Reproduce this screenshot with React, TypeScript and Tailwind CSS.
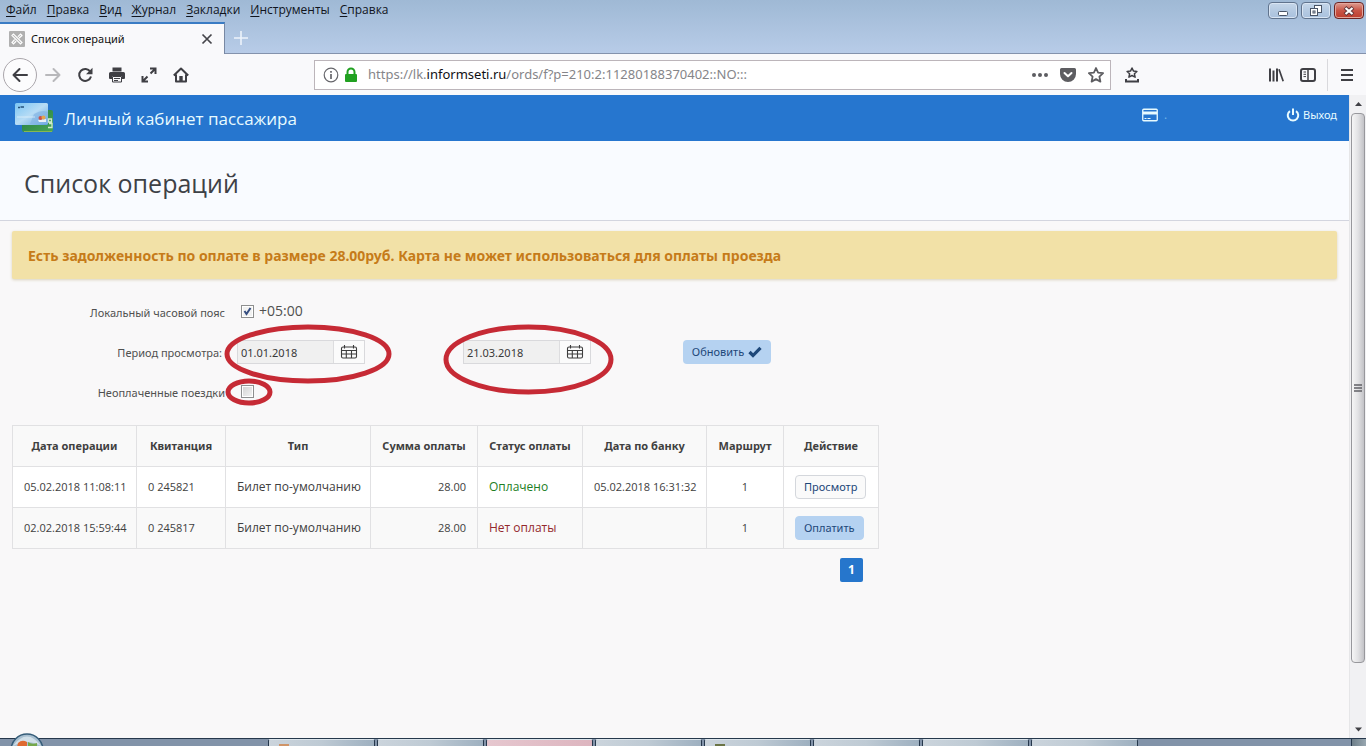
import React from "react";

const menus = ["Файл", "Правка", "Вид", "Журнал", "Закладки", "Инструменты", "Справка"];

const operations = [
  { date: "05.02.2018 11:08:11", receipt: "0 245821", type: "Билет по-умолчанию", sum: "28.00", paid: true, bank: "05.02.2018 16:31:32", route: "1" },
  { date: "02.02.2018 15:59:44", receipt: "0 245817", type: "Билет по-умолчанию", sum: "28.00", paid: false, bank: "", route: "1" },
];

const columns = [
  { title: "Дата операции", width: "w-[124px]" },
  { title: "Квитанция", width: "w-[89px]" },
  { title: "Тип", width: "w-[145px]" },
  { title: "Сумма оплаты", width: "w-[107px]" },
  { title: "Статус оплаты", width: "w-[105px]" },
  { title: "Дата по банку", width: "w-[124px]" },
  { title: "Маршрут", width: "w-[77px]" },
  { title: "Действие", width: "w-[95px]" },
];

function Icon({ children, label, className = "h-4 w-4" }: { children: React.ReactNode; label?: string; className?: string }) {
  return (
    <svg viewBox="0 0 16 16" className={className} fill="none" stroke="currentColor" strokeWidth="2" aria-label={label} aria-hidden={label ? undefined : true}>
      {children}
    </svg>
  );
}

function ToolButton({ label, children, className = "" }: { label: string; children: React.ReactNode; className?: string }) {
  return (
    <button type="button" aria-label={label} className={`flex h-8 w-8 shrink-0 items-center justify-center ${className}`}>
      <Icon>{children}</Icon>
    </button>
  );
}

function Ellipse({ className, w, h }: { className: string; w: number; h: number }) {
  return (
    <svg viewBox={`0 0 ${w} ${h}`} className={`pointer-events-none absolute z-10 max-w-none ${className}`} aria-hidden="true">
      <ellipse cx={w / 2} cy={h / 2} rx={w / 2 - 3} ry={h / 2 - 3} fill="none" stroke="#c62a35" strokeWidth="5" />
    </svg>
  );
}

function TitleBar() {
  return (
    <div className="flex h-[22px] shrink-0 items-start justify-between">
      <nav className="flex h-5 items-center gap-2.5 pl-1.5 text-xs text-[#10141c]">
        {menus.map((m) => (
          <button type="button" key={m} className="leading-5">
            <u className="underline-offset-2">{m[0]}</u>
            {m.slice(1)}
          </button>
        ))}
      </nav>
      <div className="flex gap-[3px] pt-0.5 pr-0.5">
        <button type="button" aria-label="Свернуть" className="flex h-[17px] w-[30px] items-center justify-center rounded-sm border border-[#60738d] bg-linear-to-b from-[#c5d6e9] via-[#b5cae2] to-[#a9c1de] shadow-[inset_0_0_0_1px_#d9e5f3]">
          <svg viewBox="0 0 12 12" className="h-3 w-3"><rect x="1.5" y="6.5" width="9" height="4" rx="1" fill="#fff" stroke="#4a5567" /></svg>
        </button>
        <button type="button" aria-label="Восстановить" className="flex h-[17px] w-[30px] items-center justify-center rounded-sm border border-[#60738d] bg-linear-to-b from-[#c5d6e9] via-[#b5cae2] to-[#a9c1de] shadow-[inset_0_0_0_1px_#d9e5f3]">
          <svg viewBox="0 0 12 12" className="h-3 w-3" fill="#fff" stroke="#4a5567">
            <rect x="4.5" y="0.5" width="7" height="7" />
            <rect x="0.5" y="3.5" width="7" height="7" />
            <rect x="3" y="6" width="2" height="2" />
          </svg>
        </button>
        <button type="button" aria-label="Закрыть" className="flex h-[17px] w-[30px] items-center justify-center rounded-sm border border-[#6b2423] bg-linear-to-b from-[#dc9b91] via-[#c85547] to-[#bd3c2d] shadow-[inset_0_0_0_1px_#e2a79d]">
          <svg viewBox="0 0 12 12" className="h-3 w-3">
            <path d="M2 2.5 10 9.5M10 2.5 2 9.5" stroke="#5e3539" strokeWidth="4" />
            <path d="M2.5 3 9.5 9M9.5 3 2.5 9" stroke="#fff" strokeWidth="2.2" />
          </svg>
        </button>
      </div>
    </div>
  );
}

function TabStrip() {
  return (
    <div className="flex h-8 shrink-0 items-stretch">
      <div className="flex w-[225px] shrink-0 items-center border-t-2 border-r border-t-[#3a7cc4] border-r-[#7888a3] bg-[#f9f9fb] pr-[11px] pl-[9px]">
        <svg viewBox="0 0 16 16" className="h-4 w-4 shrink-0" aria-hidden="true">
          <rect width="16" height="16" rx="1" fill="#b0b0b0" />
          <g stroke="#fff" fill="none" strokeWidth="1.2" strokeLinecap="round">
            <path d="M3 4.5 4.5 3 13 11.5 11.5 13ZM13 4.5 11.5 3 9.2 5.3M6.8 10.5 4.5 13 3 11.5 5.3 9M10.4 6.8 13 4.5" />
          </g>
        </svg>
        <span className="flex-1 pl-1.5 font-['Noto_Sans',sans-serif] text-[11px] text-[#111]">Список операций</span>
        <button type="button" aria-label="Закрыть вкладку" className="text-[#45454a]">
          <svg viewBox="0 0 12 12" className="h-3 w-3"><path d="M1.5 1.5 10.5 10.5M10.5 1.5 1.5 10.5" stroke="currentColor" strokeWidth="1.7" /></svg>
        </button>
      </div>
      <div className="flex flex-1 items-center border-b border-[#8492ac] pl-2">
        <button type="button" aria-label="Новая вкладка" className="text-[#edf3fb]">
          <Icon><path d="M8 1V15M1 8H15" strokeWidth="1.6" /></Icon>
        </button>
      </div>
    </div>
  );
}

function Toolbar() {
  return (
    <div className="flex h-[41px] shrink-0 items-center bg-[#f9f9fb] pr-[3px] pl-[3px] text-[#3f3f44]">
      <button type="button" aria-label="Назад" className="flex h-[34px] w-[34px] shrink-0 items-center justify-center rounded-full border border-[#aaa6ab] bg-[#fcfcfd]">
        <Icon><path d="M15 8H1.5M7.5 2 1.5 8 7.5 14" strokeLinecap="round" strokeLinejoin="round" /></Icon>
      </button>
      <ToolButton label="Вперёд" className="text-[#b8b8bb]"><path d="M1 8H14.5M8.5 2 14.5 8 8.5 14" strokeLinecap="round" strokeLinejoin="round" /></ToolButton>
      <ToolButton label="Обновить"><path d="M13.3 4.7A6 6 0 1 0 14 9.5" /><path d="M15.5 0.8V7.2H9Z" fill="currentColor" stroke="none" /></ToolButton>
      <ToolButton label="Печать">
        <path d="M3.5 0.5h9v4h-9zM1.5 5h13a1.5 1.5 0 0 1 1.5 1.5V11a1 1 0 0 1-1 1h-2V9H3v3H1a1 1 0 0 1-1-1V6.5A1.5 1.5 0 0 1 1.5 5Z" fill="currentColor" stroke="none" />
        <path d="M3.5 9.5h9v5.5h-9zM5 11.5h6M5 13.5h4" strokeWidth="1" />
      </ToolButton>
      <ToolButton label="Во весь экран"><path d="M9 1.5H14.5V7M14 2 9.5 6.5M7 14.5H1.5V9M2 14 6.5 9.5" /></ToolButton>
      <ToolButton label="Домой"><path d="M0.8 8.5 8 1.5 15.2 8.5M3 7.5V14.5H13V7.5" strokeLinejoin="round" /><path d="M6.3 9h3.4v5H6.3z" fill="currentColor" stroke="none" /></ToolButton>
      <div className="ml-[117px] flex h-[30px] min-w-0 flex-1 items-center border border-[#bcb5ba] bg-white pl-2">
        <Icon className="h-4 w-4 shrink-0 text-[#66666b]"><circle cx="8" cy="8" r="6.8" strokeWidth="1.2" /><path d="M8 7V12M8 4V5.7" strokeWidth="1.7" /></Icon>
        <svg viewBox="0 0 14 16" className="ml-[5px] h-4 w-3.5 shrink-0 text-[#21a121]" aria-hidden="true">
          <rect x="1" y="7" width="12" height="8" rx="1" fill="currentColor" /><path d="M3.5 8V5a3.5 3.5 0 0 1 7 0V8" stroke="currentColor" strokeWidth="2" fill="none" />
        </svg>
        <div className="min-w-0 flex-1 truncate pl-2.5 font-['Noto_Sans',sans-serif] text-[13px] text-[#858589]">
          https://lk.<span className="text-[#101014]">informseti.ru</span>/ords/f?p=210:2:11280188370402::NO:::
        </div>
        <button type="button" aria-label="Действия на странице" className="flex h-7 w-7 shrink-0 items-center justify-center text-[#5d5d61]"><Icon><g fill="currentColor" stroke="none"><circle cx="2" cy="8" r="2" /><circle cx="8" cy="8" r="2" /><circle cx="14" cy="8" r="2" /></g></Icon></button>
        <button type="button" aria-label="Сохранить в Pocket" className="flex h-7 w-7 shrink-0 items-center justify-center text-[#5d5d61]"><Icon><path d="M1.5 1h13A1.5 1.5 0 0 1 16 2.5V7A8 8 0 0 1 0 7V2.5A1.5 1.5 0 0 1 1.5 1Z" fill="currentColor" stroke="none" /><path d="M4.5 6 8 9.3 11.5 6" stroke="#fff" strokeLinecap="round" strokeLinejoin="round" /></Icon></button>
        <button type="button" aria-label="Добавить в закладки" className="flex h-7 w-7 shrink-0 items-center justify-center text-[#5d5d61]"><Icon><path d="m8 1 2.1 4.6 5 .6-3.7 3.4 1 5L8 12.1l-4.4 2.5 1-5L.9 6.2l5-.6Z" strokeWidth="1.8" strokeLinejoin="round" /></Icon></button>
      </div>
      <ToolButton label="Закладки" className="ml-[5px]"><path d="m8 1 1.5 3.1 3.4.4-2.5 2.3.7 3.4L8 8.5l-3.1 1.7.7-3.4-2.5-2.3 3.4-.4Z" strokeWidth="1.5" strokeLinejoin="round" /><path d="M2 12V14.5H14V12" /></ToolButton>
      <div className="w-[112px] shrink-0" />
      <ToolButton label="Библиотека"><path d="M2 1.5V14.5M5.5 3.5V14.5M9 1.5V14.5" /><path d="M11 2.2 15.2 14.3" strokeWidth="1.7" /></ToolButton>
      <ToolButton label="Боковая панель"><rect x="1" y="2" width="14" height="12" rx="2" /><path d="M8 2V14" strokeWidth="1.5" /><path d="M3.5 5H6M3.5 7.3H6M3.5 9.6H6" strokeWidth="1" /></ToolButton>
      <div className="ml-[3px] h-8 w-px shrink-0 bg-[#d9d9dd]" />
      <button type="button" aria-label="Меню" className="ml-[3px] flex h-8 w-8 shrink-0 items-center justify-center"><Icon><path d="M2 3H14M2 8H14M2 13H14" /></Icon></button>
    </div>
  );
}

function CardLogo() {
  return (
    <svg viewBox="0 0 42 32" className="h-8 w-[42px] shrink-0" aria-hidden="true">
      <defs>
        <linearGradient id="cardBlue" x1="0" y1="0" x2="1" y2="1"><stop offset="0" stopColor="#7bc5f3" /><stop offset=".5" stopColor="#b7dcf5" /><stop offset="1" stopColor="#5c9fdc" /></linearGradient>
        <linearGradient id="cardGreen" x1="0" y1="0" x2="1" y2="1"><stop offset="0" stopColor="#247c45" /><stop offset="1" stopColor="#49a654" /></linearGradient>
      </defs>
      <rect x="8" y="8" width="31" height="22" rx="2" fill="url(#cardGreen)" />
      <path d="M10 29.5H38" stroke="#86b850" strokeWidth="1" />
      <rect x="1" y="1" width="33" height="22" rx="1.5" fill="url(#cardBlue)" />
      <path d="M20 12Q28 7 34 10V22H16Z" fill="#85b5e4" opacity=".7" />
      <path d="M4 5.5H6M6.5 5H10" stroke="#25517b" strokeWidth="1.3" />
      <path d="M3 15H21" stroke="#e7f4fc" strokeWidth="1" opacity=".7" />
      <path d="M24 18 32 17V20H25Z" fill="#e9f1f5" />
      <circle cx="26.5" cy="16" r="2" fill="#c9514d" /><circle cx="29.5" cy="15.5" r="2" fill="#e5a64e" />
      <path d="M34.5 17h3v3h-3zM35 21.5h3v4h-4" fill="none" stroke="#cfeaca" strokeWidth="1.3" />
    </svg>
  );
}

function DateField({ id, label, value }: { id: string; label?: string; value: string }) {
  return (
    <div className="flex h-6 w-32 border border-[#d9d9dc] bg-[#fbfbfb]">
      <input id={id} aria-label={label} defaultValue={value} className="w-24 min-w-0 border-r border-[#dddddf] bg-[#f0f0f0] px-[3px] pt-px font-['Noto_Sans',sans-serif] text-[11px] leading-5 text-[#393939]" />
      <button type="button" aria-label="Открыть календарь" className="flex flex-1 items-center justify-center text-[#3d3d3d]">
        <svg viewBox="0 0 18 16" className="h-4 w-[18px]" fill="none" stroke="currentColor" strokeWidth="1.1" aria-hidden="true">
          <rect x="1.5" y="3" width="15" height="11" rx="1.5" /><path d="M1.5 6.5H16.5M1.5 10H16.5M6.3 6.5V14M11.5 6.5V14M4.5 1V4.5M13.5 1V4.5" />
        </svg>
      </button>
    </div>
  );
}

function Filters() {
  return (
    <form className="grid auto-rows-[40px] grid-cols-[213px_226px_220px_auto] items-center justify-start pt-[13px] pl-3 font-['Noto_Sans',sans-serif] text-[11px] text-[#505050]" onSubmit={(e) => e.preventDefault()}>
      <label htmlFor="tz" className="pt-0.5 text-right">Локальный часовой пояс</label>
      <div className="col-span-3 flex items-center gap-[5px] pb-0.5 pl-4">
        <input id="tz" type="checkbox" defaultChecked className="h-[13px] w-[13px] appearance-none border border-[#8e8f8f] bg-[#f1f1f1] shadow-[inset_0_0_0_1px_#fff] checked:bg-[url('data:image/svg+xml;utf8,%3Csvg%20xmlns=%22http://www.w3.org/2000/svg%22%20viewBox=%220%200%2011%2011%22%3E%3Cpath%20d=%22M2.5%205L4.5%208L8.5%202%22%20fill=%22none%22%20stroke=%22%23354d80%22%20stroke-width=%222%22/%3E%3C/svg%3E')]" />
        <span className="font-['Open_Sans',sans-serif] text-sm">+05:00</span>
      </div>
      <label htmlFor="from" className="pt-0.5 pr-[3px] text-right">Период просмотра:</label>
      <div className="relative pl-3">
        <DateField id="from" value="01.01.2018" />
        <Ellipse className="-top-4 -left-px h-[60px] w-[168px]" w={168} h={60} />
      </div>
      <div className="relative pl-3">
        <DateField id="to" label="Период по" value="21.03.2018" />
        <Ellipse className="-top-4 -left-2 h-[71px] w-[171px]" w={171} h={71} />
      </div>
      <button type="submit" className="ml-3 flex h-6 w-[88px] items-center justify-center gap-1 rounded bg-[#b5d2f1] text-[#1d4779]">
        Обновить
        <svg viewBox="0 0 14 12" className="h-3 w-3.5" aria-hidden="true"><path d="M1.5 6 5 9.5 12.5 1.8" fill="none" stroke="currentColor" strokeWidth="3.2" /></svg>
      </button>
      <label htmlFor="unpaid" className="pt-0.5 text-right">Неоплаченные поездки</label>
      <div className="relative flex pb-0.5 pl-4">
        <input id="unpaid" type="checkbox" className="h-[13px] w-[13px] appearance-none border border-[#8e8f8f] bg-linear-to-br from-[#d2d2d2] to-[#f5f5f5] shadow-[inset_0_0_0_1px_#fff]" />
        <Ellipse className="-top-[7px] left-0 h-7 w-12" w={48} h={28} />
      </div>
    </form>
  );
}

function Operations() {
  const cell = "h-[41px] border border-[#e1e1e3] px-[11px]";
  const action = "block h-6 rounded border px-2 font-['Noto_Sans',sans-serif] text-[11px] text-[#1d4779]";
  return (
    <div className="ml-3 w-[867px] pt-[13px] text-[#404040]">
      <table className="w-full table-fixed border-collapse text-xs whitespace-nowrap">
        <colgroup>{columns.map((c) => <col key={c.title} className={c.width} />)}</colgroup>
        <thead>
          <tr>{columns.map((c) => <th key={c.title} className="h-[41px] border border-[#e1e1e3] bg-[#f9f9f9] px-1 font-['Noto_Sans',sans-serif] text-[11px] font-bold">{c.title}</th>)}</tr>
        </thead>
        <tbody>
          {operations.map((o, i) => (
            <tr key={o.date} className={i % 2 ? "bg-[#f9f9f9]" : "bg-white"}>
              <td className={`${cell} text-[11px]`}>{o.date}</td>
              <td className={`${cell} text-[11px]`}>{o.receipt}</td>
              <td className={cell}>{o.type}</td>
              <td className={`${cell} text-right text-[11px]`}>{o.sum}</td>
              <td className={`${cell} ${o.paid ? "text-[#1d7e24]" : "text-[#94282c]"}`}>{o.paid ? "Оплачено" : "Нет оплаты"}</td>
              <td className={`${cell} text-[11px]`}>{o.bank}</td>
              <td className={`${cell} text-center text-[11px]`}>{o.route}</td>
              <td className={cell}>
                {o.paid ? (
                  <button type="button" className={`${action} border-[#d4d7dc] bg-[#fafafa]`}>Просмотр</button>
                ) : (
                  <button type="button" className={`${action} border-[#b5d2f1] bg-[#b5d2f1]`}>Оплатить</button>
                )}
              </td>
            </tr>
          ))}
        </tbody>
      </table>
      <div className="flex justify-end pt-[9px] pr-4">
        <a href="#1" className="flex h-6 w-[23px] items-center justify-center rounded-xs bg-[#2676cc] text-xs font-bold text-white">1</a>
      </div>
    </div>
  );
}

function Scrollbar() {
  return (
    <div className="flex w-[17px] shrink-0 flex-col items-center border-l border-[#e6e6e8] bg-[#f1f1f3]">
      <svg viewBox="0 0 17 18" className="h-[18px] w-[17px] shrink-0"><path d="M5 11 8.5 7 12 11Z" fill="#404045" /></svg>
      <div className="flex min-h-0 w-[14px] flex-1 items-center justify-center rounded-sm border border-[#98989c] bg-linear-to-r from-[#f6f6f6] via-[#e2e2e4] to-[#c3c3c7]">
        <svg viewBox="0 0 8 8" className="h-2 w-2"><path d="M0 1H8M0 4H8M0 7H8" stroke="#606065" strokeWidth="1.3" /></svg>
      </div>
      <div className="h-[58px] shrink-0" />
      <svg viewBox="0 0 17 17" className="h-[17px] w-[17px] shrink-0"><path d="M5 6.5 8.5 10.5 12 6.5Z" fill="#404045" /></svg>
    </div>
  );
}

function Taskbar() {
  return (
    <div className="relative flex h-2 shrink-0 border-t border-[#26384c] bg-[#8293a9]">
      <div className="absolute -top-1.5 left-2.5 h-3.5 w-[34px] overflow-hidden">
        <svg viewBox="0 0 34 14" className="h-3.5 w-[34px]" aria-hidden="true">
          <circle cx="17" cy="17" r="16" fill="#a8bfd0" stroke="#365d79" strokeWidth="1.5" />
          <path d="M3 13Q17-6 31 13Q17 5 3 13Z" fill="#d2e0e9" />
          <path d="M8 10Q12 6 17 9V14H7Z" fill="#df6a31" /><path d="M18 9Q22 12 27 10V14H18Z" fill="#75a84b" />
        </svg>
      </div>
      <div className="ml-[268px] flex">
        {[0, 1, 2, 3, 4, 5, 6, 7].map((n) => (
          <div key={n} className="w-[109px] pr-0.5">
            <div className={`h-full rounded-t-xs border-x border-t border-x-[#26384c] border-t-[#dce5ec] bg-linear-to-r ${n === 2 ? "from-[#e6c7cf] to-[#ddb5bf]" : "from-[#cbd4dc] via-[#becad4] to-[#9eb0c0]"}`}>
              {(n === 0 || n === 4) && <div className={`mt-1 ml-2.5 h-0.5 w-2.5 ${n === 0 ? "bg-[#cf9468]" : "bg-[#6b7445]"}`} />}
            </div>
          </div>
        ))}
      </div>
      <div className="ml-auto w-[15px] border-l border-[#26384c] bg-linear-to-r from-[#6d7e89] to-[#98a7b0]" />
    </div>
  );
}

export default function App() {
  return (
    <div className="flex h-screen flex-col overflow-hidden bg-[#f9f8f9] font-['Open_Sans','Noto_Sans',sans-serif]">
      <header className="flex shrink-0 flex-col bg-linear-to-b from-[#9fb9d5] to-[#b8cce8] to-[54px]">
        <TitleBar />
        <TabStrip />
        <Toolbar />
      </header>
      <div className="flex min-h-0 flex-1">
        <main className="min-w-0 flex-1 overflow-hidden">
          <div className="flex h-[46px] items-center bg-[#2676cf] pr-3 pl-3.5 text-[#e8fbff]">
            <CardLogo />
            <span className="flex-1 pt-px pl-2 text-[17px]">Личный кабинет пассажира</span>
            <div className="mb-1.5 flex items-center">
              <svg viewBox="0 0 16 14" className="h-3.5 w-4" aria-label="Карта"><rect x=".75" y="1.25" width="14.5" height="11.5" rx="1" fill="none" stroke="currentColor" strokeWidth="1.3" /><path d="M1 3.5H15V6.5H1Z" fill="currentColor" /><path d="M2.5 10.5H4.5M5.5 10.5H8.5" stroke="currentColor" /></svg>
              <span className="w-32 pl-1.5 text-xs text-[#70b5e8]">.</span>
              <a href="#logout" className="flex items-center gap-[3px] font-['Noto_Sans',sans-serif] text-[11px]">
                <Icon className="h-3.5 w-3.5"><path d="M4.5 3.5A6 6 0 1 0 11.5 3.5M8 0.5V8" strokeWidth="2.3" /></Icon>
                Выход
              </a>
            </div>
          </div>
          <div className="flex h-20 items-center border-b border-[#d3d5df] bg-[#f9fbff] pl-6">
            <h1 className="pt-1 text-[25px] leading-8 text-[#3e4146]">Список операций</h1>
          </div>
          <div role="alert" className="mx-3 mt-2.5 flex h-12 items-center rounded-xs bg-[#f2e1a7] px-4 pt-0.5 font-['Noto_Sans',sans-serif] text-sm font-bold text-[#c67b19] shadow-[0_1px_3px_#d9d2bd]">
            Есть задолженность по оплате в размере 28.00руб. Карта не может использоваться для оплаты проезда
          </div>
          <Filters />
          <Operations />
        </main>
        <Scrollbar />
      </div>
      <Taskbar />
    </div>
  );
}
